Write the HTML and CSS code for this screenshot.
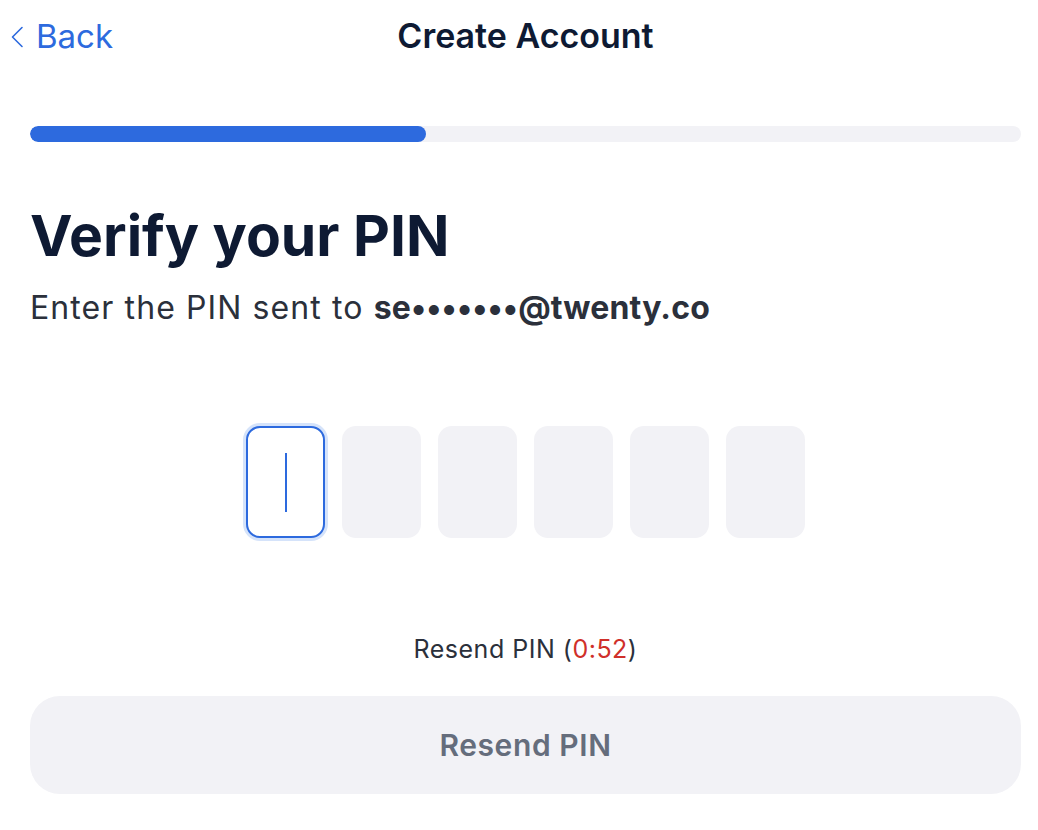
FILE: index.html
```html
<!DOCTYPE html>
<html lang="en">
<head>
<meta charset="utf-8">
<title>Create Account</title>
<link rel="stylesheet" href="styles.css">
</head>
<body>
<div class="screen">
  <header class="topbar">
    <a class="back" href="#">
      <svg class="chev" width="14" height="22" viewBox="0 0 14 22" aria-hidden="true"><path d="M12 1.5 L2.5 11 L12 20.5" fill="none" stroke="currentColor" stroke-width="1.6" stroke-linecap="round" stroke-linejoin="round"/></svg>
      <span>Back</span>
    </a>
    <h1 class="title">Create Account</h1>
    <span class="spacer"></span>
  </header>

  <div class="progress"><div class="progress-fill" style="width: 40%"></div></div>

  <h2 class="heading">Verify your PIN</h2>
  <p class="subtitle">Enter the PIN sent to <strong>se•••••••@twenty.co</strong></p>

  <div class="pins">
    <div class="pin active"><span class="caret"></span></div>
    <div class="pin"></div>
    <div class="pin"></div>
    <div class="pin"></div>
    <div class="pin"></div>
    <div class="pin"></div>
  </div>

  <p class="resend-note">Resend PIN (<span class="timer">0:52</span>)</p>

  <button class="resend-btn" type="button">Resend PIN</button>
</div>
</body>
</html>
```

FILE: styles.css
```css
* { box-sizing: border-box; }

html, body {
  margin: 0;
  padding: 0;
  background: #ffffff;
}

body {
  font-family: Inter, "Noto Sans", "Liberation Sans", sans-serif;
  color: #0e1a33;
}

.screen {
  padding: 0 17px 0 30px;
  display: flex;
  flex-direction: column;
}

.topbar {
  display: grid;
  grid-template-columns: 1fr auto 1fr;
  align-items: center;
  padding-top: 16px;
  height: 56px;
}

.back {
  display: flex;
  align-items: center;
  gap: 12px;
  margin-left: -20px;
  color: #2d6ade;
  text-decoration: none;
  font-size: 33px;
  line-height: 40px;
  font-weight: 400;
}

.chev {
  display: block;
  margin-top: 2px;
}

.title {
  margin: 0;
  font-size: 34px;
  line-height: 40px;
  font-weight: 600;
  color: #0e1a33;
}

.progress {
  margin-top: 70px;
  height: 16px;
  border-radius: 8px;
  background: #f2f2f6;
  overflow: hidden;
}

.progress-fill {
  height: 100%;
  border-radius: 8px;
  background: #2d6ade;
}

.heading {
  margin: 59px 0 0;
  font-size: 57px;
  line-height: 70px;
  font-weight: 700;
  color: #0e1a33;
}

.subtitle {
  margin: 18px 0 0;
  font-size: 32px;
  line-height: 38px;
  font-weight: 400;
  letter-spacing: 1.1px;
  color: #2b303b;
}

.subtitle strong {
  font-weight: 700;
  letter-spacing: 0.15px;
}

.pins {
  margin-top: 99px;
  display: flex;
  justify-content: center;
  gap: 17px;
}

.pin {
  width: 79px;
  height: 112px;
  border-radius: 14px;
  background: #f2f2f6;
  display: flex;
  align-items: center;
  justify-content: center;
}

.pin.active {
  background: #ffffff;
  border: 2px solid #2d6ade;
  box-shadow: 0 0 0 3px #d5e3fa;
}

.caret {
  width: 2px;
  height: 59px;
  background: #2d6ade;
}

.resend-note {
  margin: 96px 0 0;
  text-align: center;
  font-size: 25px;
  line-height: 30px;
  letter-spacing: 0.5px;
  color: #2b303b;
}

.timer {
  color: #d0302a;
}

.resend-btn {
  margin-top: 32px;
  height: 98px;
  border: 0;
  border-radius: 30px;
  background: #f2f2f6;
  font-family: inherit;
  font-size: 30px;
  font-weight: 600;
  letter-spacing: 0.6px;
  color: #656d7c;
}
```
